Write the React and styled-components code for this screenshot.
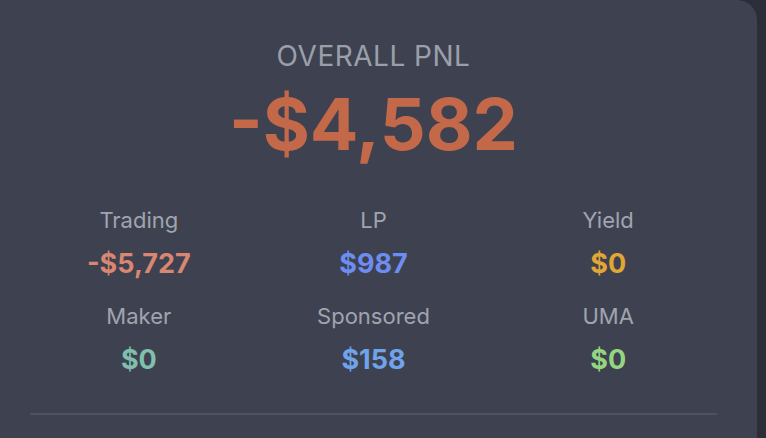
import React from "react";
import styled, { createGlobalStyle } from "styled-components";

const Global = createGlobalStyle`
  html, body {
    margin: 0;
    padding: 0;
    background: #2b2e39;
    overflow: hidden;
  }
  body {
    font-family: Inter, "Liberation Sans", Arial, sans-serif;
  }
`;

const Page = styled.div`
  width: 766px;
  height: 438px;
  overflow: hidden;
`;

const Card = styled.section`
  box-sizing: border-box;
  margin-left: -10px;
  width: 767px;
  min-height: 460px;
  background: #3e4250;
  border-radius: 0 20px 20px 0;
  padding: 39px 40px 0 40px;
  display: flex;
  flex-direction: column;
  align-items: stretch;
`;

const Title = styled.div`
  text-align: center;
  font-size: 28px;
  line-height: 34px;
  font-weight: 400;
  color: #9b9faa;
  letter-spacing: 0.5px;
`;

const Total = styled.div`
  text-align: center;
  margin-top: 11px;
  font-size: 72px;
  line-height: 80px;
  font-weight: 700;
  color: #c4684a;
`;

const Grid = styled.div`
  margin-top: 42px;
  display: grid;
  grid-template-columns: repeat(3, 1fr);
  column-gap: 17px;
  row-gap: 22px;
`;

const Cell = styled.div`
  display: flex;
  flex-direction: column;
  align-items: center;
  gap: 14px;
`;

const Label = styled.div`
  font-size: 22px;
  line-height: 28px;
  color: #a0a4b0;
`;

const Value = styled.div`
  font-size: 27px;
  line-height: 32px;
  font-weight: 700;
  color: ${(p) => p.$color};
`;

const Divider = styled.hr`
  margin: 37px 0 0 0;
  border: none;
  height: 2px;
  background: #4f5361;
`;

const items = [
  { label: "Trading", value: "-$5,727", color: "#d98672" },
  { label: "LP", value: "$987", color: "#6d8df2" },
  { label: "Yield", value: "$0", color: "#e0a735" },
  { label: "Maker", value: "$0", color: "#7fbfad" },
  { label: "Sponsored", value: "$158", color: "#6fa3ea" },
  { label: "UMA", value: "$0", color: "#94d680" },
];

export default function App() {
  return (
    <Page>
      <Global />
      <Card>
        <Title>OVERALL PNL</Title>
        <Total>-$4,582</Total>
        <Grid>
          {items.map((it) => (
            <Cell key={it.label}>
              <Label>{it.label}</Label>
              <Value $color={it.color}>{it.value}</Value>
            </Cell>
          ))}
        </Grid>
        <Divider />
      </Card>
    </Page>
  );
}
